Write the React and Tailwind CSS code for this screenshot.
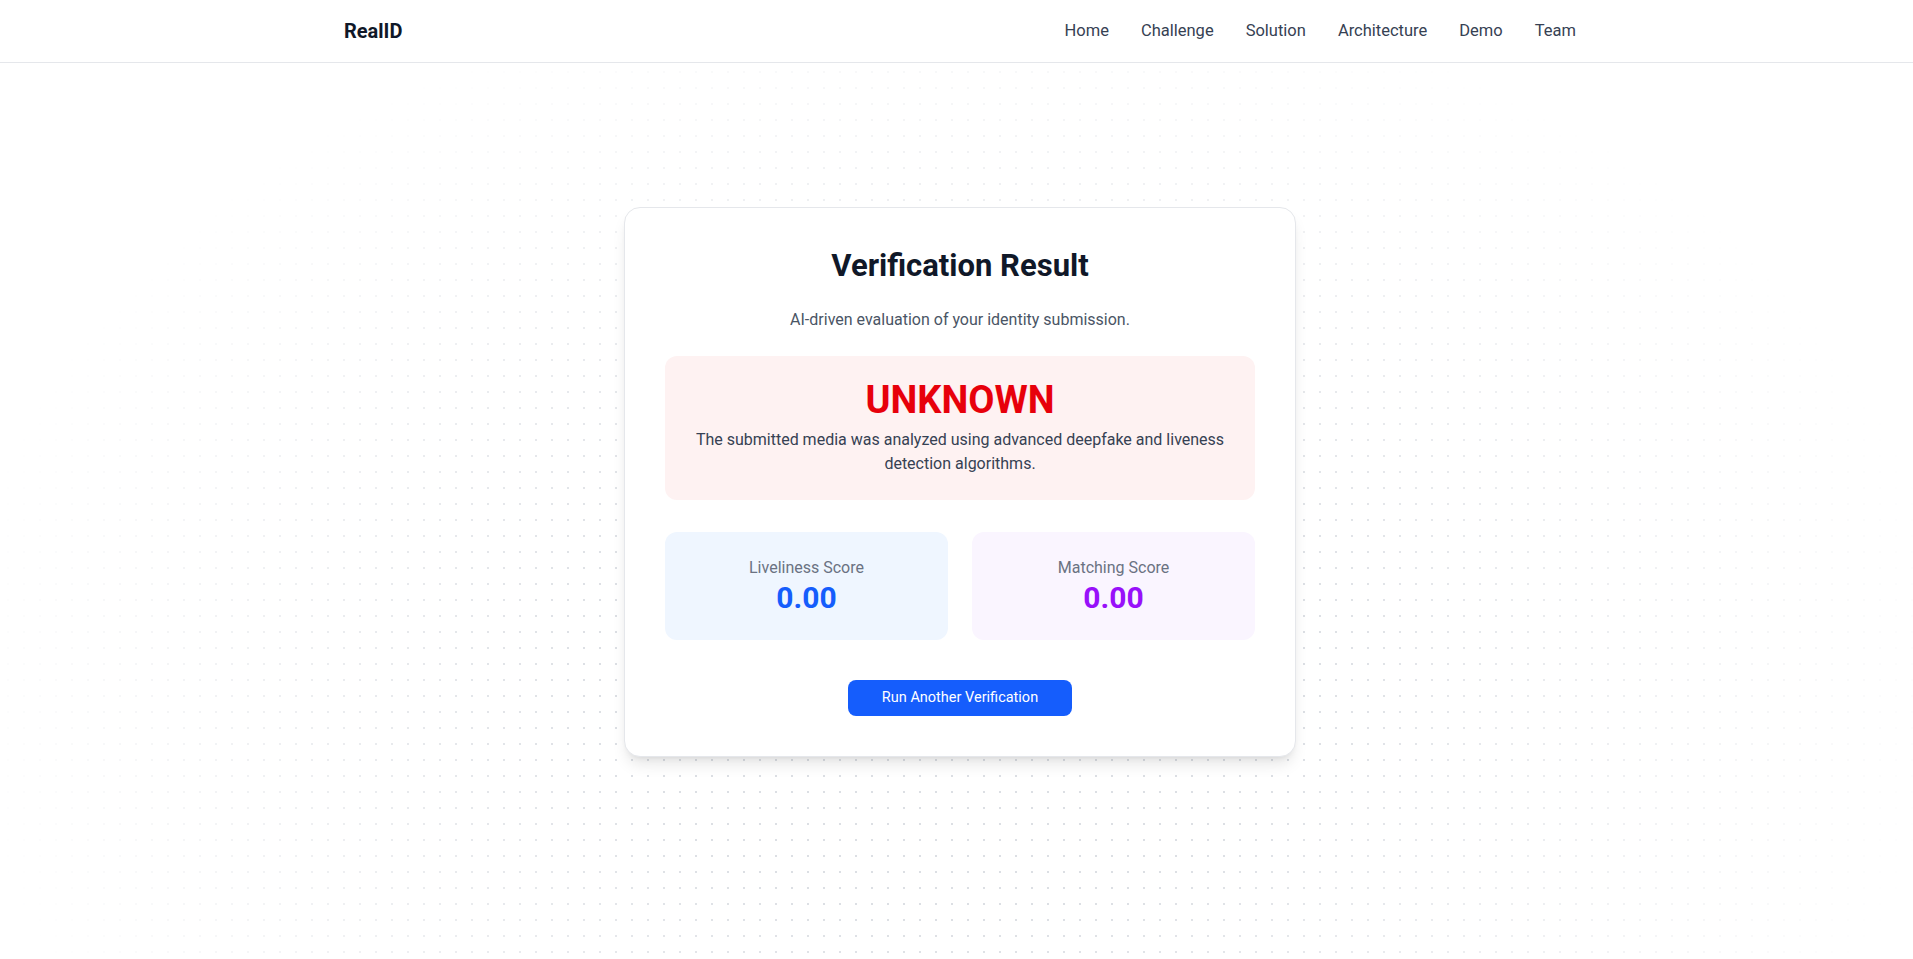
export default function App() {
  const links = ["Home", "Challenge", "Solution", "Architecture", "Demo", "Team"];
  return (
    <div className="relative min-h-screen bg-white pl-[7px] text-gray-900 font-['Roboto',sans-serif]">
      <div
        aria-hidden="true"
        className="pointer-events-none absolute inset-0 bg-[radial-gradient(circle,#dcdfe4_1px,transparent_1px)] bg-[size:16px_16px] [mask-image:radial-gradient(ellipse_1000px_700px_at_50%_70%,#000_35%,transparent_100%)]"
      />
      <header className="fixed inset-x-0 top-0 z-10 border-b border-gray-200 bg-white pl-[7px]">
        <div className="mx-auto flex h-[62px] max-w-7xl items-center justify-between px-6">
          <span className="text-xl font-bold text-gray-900">RealID</span>
          <nav className="flex items-center gap-8 text-[16.5px] text-gray-700">
            {links.map((l) => (
              <a key={l} href="#" className="hover:text-gray-900">
                {l}
              </a>
            ))}
          </nav>
        </div>
      </header>

      <main className="relative flex min-h-screen items-center justify-center px-4 pt-1">
        <div className="w-full max-w-2xl rounded-2xl border border-gray-200 bg-white p-10 text-center shadow-lg">
          <h1 className="mb-6 text-[31px] leading-9 font-bold text-gray-900">Verification Result</h1>
          <p className="mb-6 text-base text-gray-600">AI-driven evaluation of your identity submission.</p>

          <div className="mb-8 rounded-xl bg-red-50 p-6">
            <div className="text-[38px] leading-10 font-bold text-red-600">UNKNOWN</div>
            <p className="mt-2 text-base text-gray-700">
              The submitted media was analyzed using advanced deepfake and liveness detection algorithms.
            </p>
          </div>

          <div className="grid grid-cols-2 gap-6">
            <div className="rounded-xl bg-blue-50 p-6">
              <div className="text-base text-gray-500">Liveliness Score</div>
              <div className="text-3xl font-bold text-blue-600">0.00</div>
            </div>
            <div className="rounded-xl bg-purple-50 p-6">
              <div className="text-base text-gray-500">Matching Score</div>
              <div className="text-3xl font-bold text-purple-600">0.00</div>
            </div>
          </div>

          <button className="mt-10 rounded-lg bg-blue-600 px-[34px] py-2 text-[14.5px] leading-5 text-white hover:bg-blue-700">
            Run Another Verification
          </button>
        </div>
      </main>
    </div>
  );
}
